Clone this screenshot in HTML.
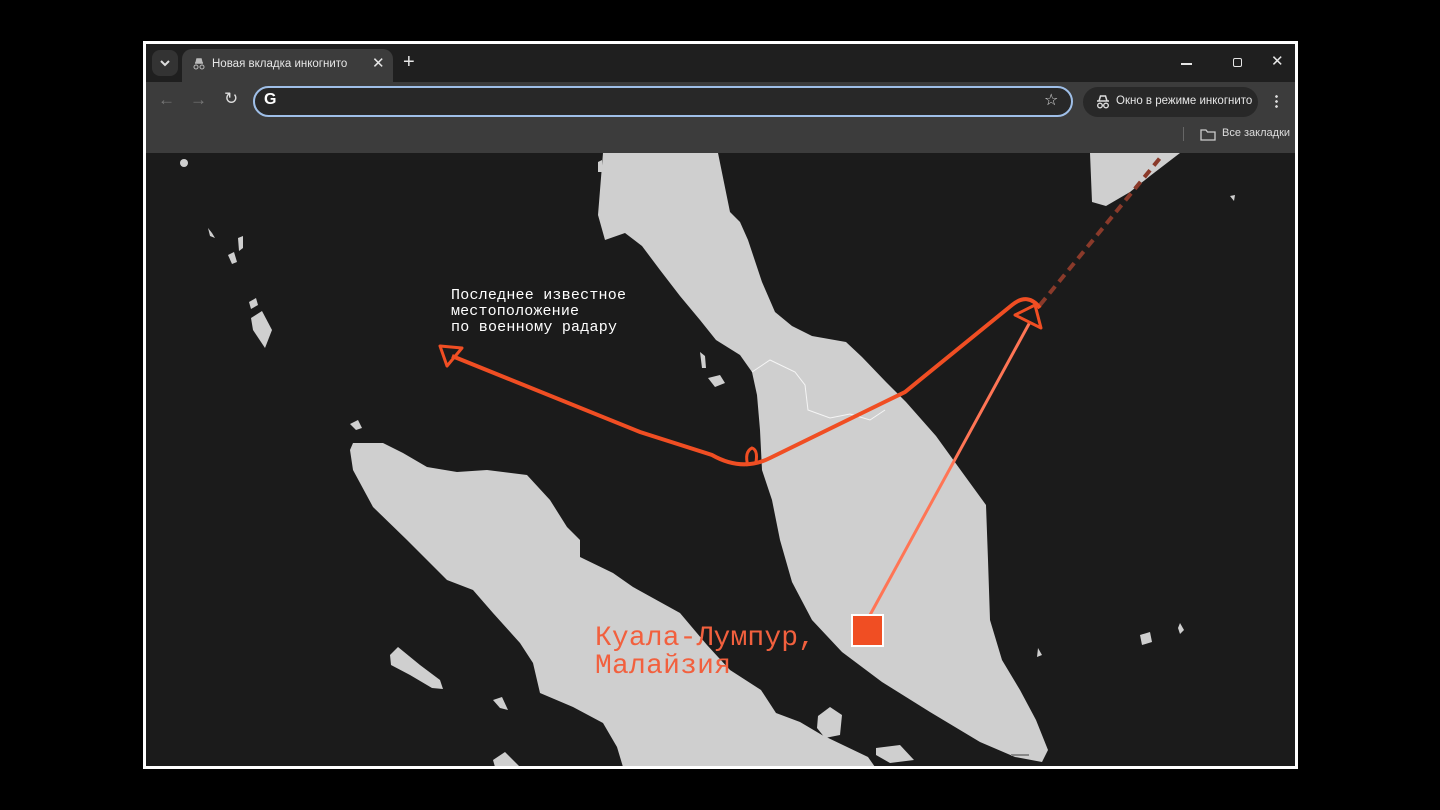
<!DOCTYPE html>
<html><head><meta charset="utf-8"><style>
html,body{margin:0;padding:0;width:1440px;height:810px;background:#000;overflow:hidden;font-family:"Liberation Sans","DejaVu Sans",sans-serif}
.frame{position:absolute;left:143px;top:41px;width:1149px;height:722px;border:3px solid #fff;background:#1b1b1b;overflow:hidden}
.tabs{position:absolute;left:0;top:0;width:100%;height:38px;background:#1f1f1f}
.tb{position:absolute;left:0;top:38px;width:100%;height:71px;background:#3c3c3c}
.abs{position:absolute}
</style></head><body>
<div class="frame">
 <div class="tabs">
  <div class="abs" style="left:6px;top:6px;width:26px;height:26px;border-radius:8px;background:#333"></div>
  <svg class="abs" style="left:12px;top:13px" width="14" height="12"><path d="M3 4l4 4 4-4" stroke="#ddd" stroke-width="2" fill="none"/></svg>
  <div class="abs" style="left:36px;top:5px;width:211px;height:40px;background:#3c3c3c;border-radius:10px 10px 0 0"></div>
  <svg class="abs" style="left:46px;top:14px" width="14" height="12"><path d="M3 5h8M4 5l1-4h4l1 4" stroke="#bbb" stroke-width="1.5" fill="#bbb"/><circle cx="4" cy="9" r="2" stroke="#bbb" fill="none"/><circle cx="10" cy="9" r="2" stroke="#bbb" fill="none"/></svg>
  <div class="abs" style="left:66px;top:14px;font-size:11.5px;color:#e6e6e6">Новая вкладка инкогнито</div>
  <div class="abs" style="left:226px;top:10px;font-size:15px;color:#e6e6e6">✕</div>
  <div class="abs" style="left:257px;top:7px;font-size:20px;color:#e6e6e6">+</div>
  <div class="abs" style="left:1035px;top:19px;width:11px;height:1.5px;background:#e6e6e6"></div>
  <div class="abs" style="left:1087px;top:14px;width:7px;height:7px;border:1.5px solid #e6e6e6;border-radius:2px"></div>
  <div class="abs" style="left:1125px;top:8px;font-size:15px;color:#e6e6e6">✕</div>
 </div>
 <div class="tb">
  <div class="abs" style="left:12px;top:8px;font-size:17px;color:#777">←</div>
  <div class="abs" style="left:44px;top:8px;font-size:17px;color:#777">→</div>
  <div class="abs" style="left:78px;top:7px;font-size:17px;color:#ddd">↻</div>
  <div class="abs" style="left:107px;top:4px;width:816px;height:27px;border:2px solid #9fbfe8;border-radius:16px;background:#282828"></div>
  <div class="abs" style="left:118px;top:9px;font-size:16px;font-weight:bold;color:#fff">G</div>
  <div class="abs" style="left:898px;top:8px;font-size:16px;color:#ddd">☆</div>
  <div class="abs" style="left:937px;top:5px;width:175px;height:30px;border-radius:15px;background:#282828"></div>
  <svg class="abs" style="left:949px;top:13px" width="16" height="14"><path d="M2 6h12M4 6l1.5-5h5L12 6" stroke="#ddd" stroke-width="1.5" fill="none"/><circle cx="5" cy="10.5" r="2.3" stroke="#ddd" stroke-width="1.4" fill="none"/><circle cx="11" cy="10.5" r="2.3" stroke="#ddd" stroke-width="1.4" fill="none"/></svg>
  <div class="abs" style="left:970px;top:13px;font-size:11.5px;color:#e6e6e6">Окно в режиме инкогнито</div>
  <div class="abs" style="left:1129px;top:12px;width:3px;height:14px;background:radial-gradient(circle,#ddd 1.2px,transparent 1.5px) 0 0/3px 5px"></div>
  <div class="abs" style="left:1037px;top:45px;width:1px;height:14px;background:#666"></div>
  <svg class="abs" style="left:1054px;top:46px" width="16" height="13"><path d="M1 2h5l1.5 2H15v8H1z" stroke="#ccc" stroke-width="1.3" fill="none"/></svg>
  <div class="abs" style="left:1076px;top:45px;font-size:11px;color:#ddd">Все закладки</div>
 </div>
 <svg class="abs" style="left:-146px;top:-44px" width="1440" height="810">
  <g fill="#cfcfcf">
   <path d="M603 153 L598 215 L605 240 L625 233 L642 246 L660 270 L680 296 L700 320 L716 340 L740 355 L752 372 L757 395 L760 430 L762 470 L772 500 L780 540 L792 582 L812 620 L842 652 L882 682 L930 712 L980 742 L1015 757 L1042 762 L1048 750 L1036 720 L1020 690 L1002 660 L990 620 L988 560 L986 505 L962 472 L936 436 L906 402 L886 382 L862 357 L846 342 L812 336 L792 326 L775 312 L762 282 L748 240 L740 222 L730 212 L718 153 Z"/>
   <path d="M353 443 L383 443 L403 453 L427 467 L457 472 L487 470 L527 475 L550 500 L567 527 L580 540 L580 557 L613 573 L633 587 L680 613 L707 645 L730 670 L761 690 L776 713 L800 722 L822 735 L868 757 L875 767 L623 767 L617 747 L603 723 L573 707 L540 693 L533 663 L520 643 L493 613 L473 590 L447 580 L407 540 L373 507 L353 470 L350 450 Z"/>
   <path d="M1090 153 L1180 153 L1150 176 L1130 192 L1106 206 L1092 202 Z"/>
   <path d="M390 655 L398 647 L420 665 L440 680 L443 689 L432 688 L410 675 L391 665 Z"/>
   <path d="M493 700 L502 697 L508 710 L500 708 Z"/>
   <path d="M493 760 L505 752 L520 767 L495 767 Z"/>
   <path d="M818 716 L830 707 L842 715 L840 735 L825 738 L817 728 Z"/>
   <path d="M876 748 L900 745 L914 760 L890 763 L876 755 Z"/>
   <path d="M251 318 L262 311 L272 330 L265 348 L253 330 Z"/>
   <path d="M249 302 L256 298 L258 305 L251 309 Z"/>
   <path d="M228 255 L234 252 L237 262 L232 264 Z"/>
   <path d="M238 238 L243 236 L243 248 L239 251 Z"/>
   <path d="M208 228 L212 233 L215 238 L210 236 Z"/>
   <circle cx="184" cy="163" r="4"/>
   <path d="M350 424 L358 420 L362 428 L356 430 Z"/>
   <path d="M700 352 L705 356 L706 368 L702 368 Z"/>
   <path d="M708 378 L720 375 L725 383 L715 387 Z"/>
   <path d="M598 162 L602 160 L602 172 L598 172 Z"/>
   <path d="M1230 196 L1235 195 L1234 201 Z"/>
   <path d="M1140 635 L1150 632 L1152 642 L1142 645 Z"/>
   <path d="M1180 623 L1184 630 L1180 634 L1178 628 Z"/>
   <path d="M1038 648 L1042 655 L1037 657 Z"/>
  </g>
  <path d="M752 372 L770 360 L795 372 L805 385 L808 410 L830 418 L850 414 L870 420 L885 410" stroke="#ffffff" stroke-width="1" fill="none" opacity="0.8"/>
  <line x1="1040" y1="305" x2="1160" y2="158" stroke="#8a3a2a" stroke-width="4" stroke-dasharray="9 6"/>
  <line x1="870" y1="615" x2="1030" y2="322" stroke="#ff7555" stroke-width="3"/>
  <path d="M452 356 L640 432 L712 455 Q742 472 770 458 L905 392 L1012 305 Q1028 292 1040 308" stroke="#f04e23" stroke-width="4" fill="none"/>
  <path d="M748 466 Q744 452 752 448 Q758 450 756 462" stroke="#f04e23" stroke-width="3" fill="none"/>
  <path d="M440 346 L462 348 L447 366 Z" stroke="#f04e23" stroke-width="3" fill="none" stroke-linejoin="round"/>
  <path d="M1015 315 L1035 305 L1041 328 Z" stroke="#f04e23" stroke-width="3" fill="none" stroke-linejoin="round"/>
  <rect x="852" y="615" width="31" height="31" fill="#f04e23" stroke="#fff" stroke-width="2"/>
  <g font-family="Liberation Mono, DejaVu Sans Mono, monospace" fill="#fff" font-size="15">
   <text x="451" y="299" textLength="175">Последнее известное</text>
   <text x="451" y="315" textLength="128">местоположение</text>
   <text x="451" y="331" textLength="166">по военному радару</text>
  </g>
  <g font-family="Liberation Mono, DejaVu Sans Mono, monospace" fill="#f2603e" font-size="28">
   <text x="595" y="645" textLength="220">Куала-Лумпур,</text>
   <text x="595" y="673" textLength="136">Малайзия</text>
  </g>
  <rect x="1011" y="754" width="18" height="2" fill="#888"/>
 </svg>
</div>
</body></html>
